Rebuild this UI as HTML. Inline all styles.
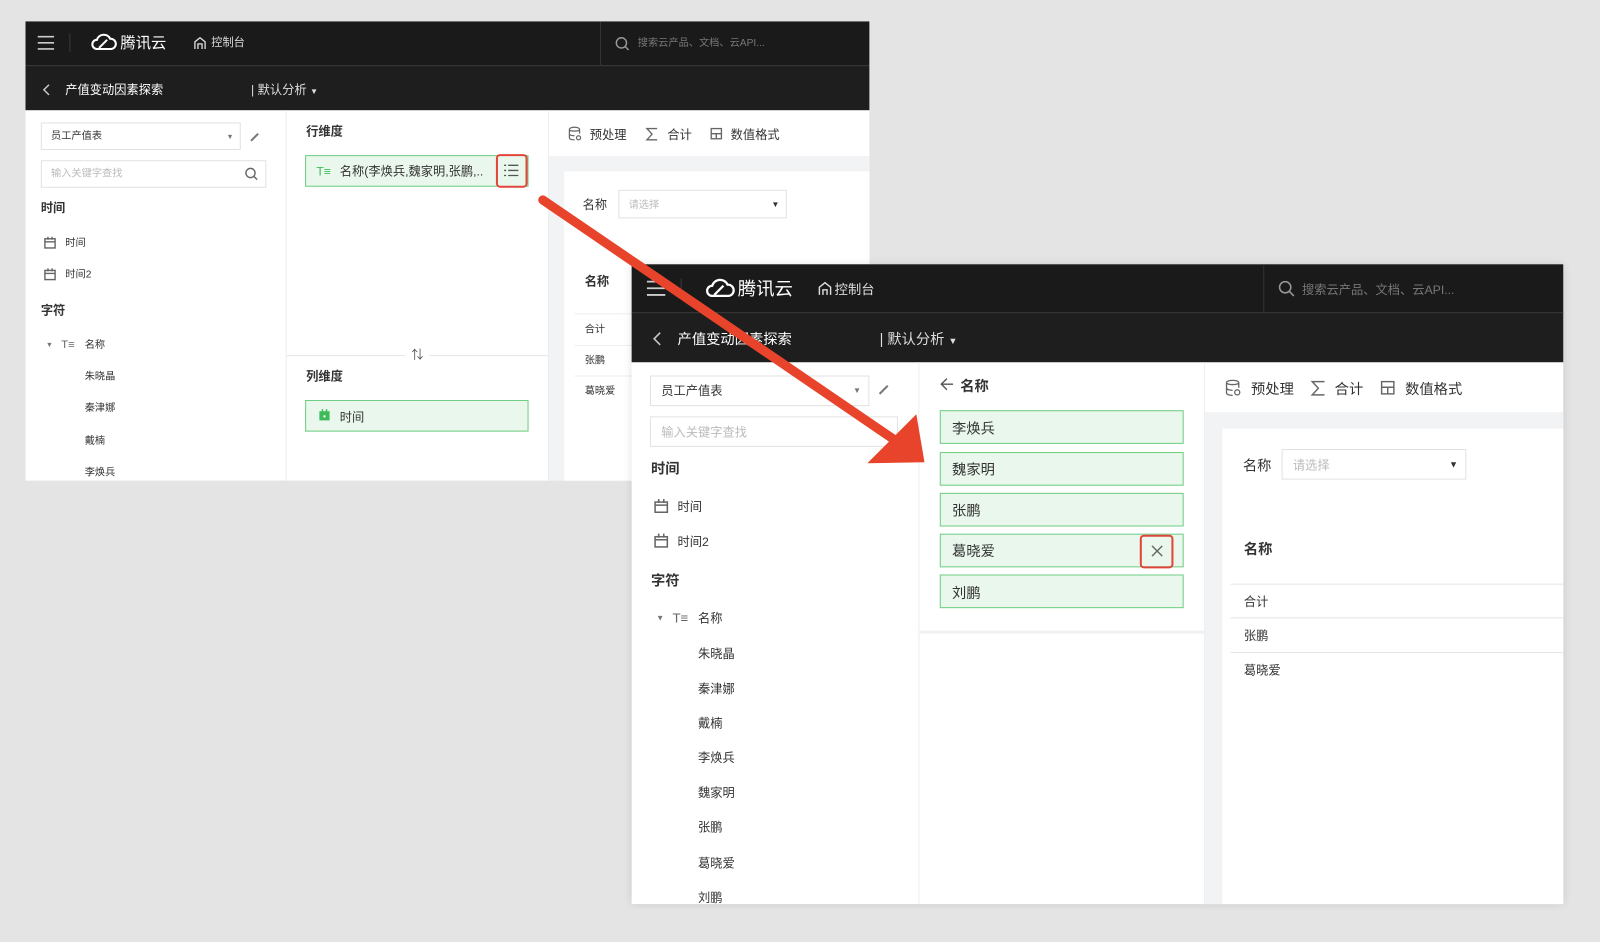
<!DOCTYPE html>
<html><head><meta charset="utf-8">
<style>
*{margin:0;padding:0;box-sizing:border-box}
html,body{width:1600px;height:942px;overflow:hidden;background:#e4e4e4}
body{font-family:"Liberation Sans","Noto Sans CJK SC",sans-serif;color:#333}
#w{position:absolute;left:0;top:0;width:1568px;height:923px;transform:scale(1.0204);transform-origin:0 0}
.a{position:absolute}
.t{position:absolute;white-space:nowrap;line-height:1}
.b{font-weight:bold}
.dark{background:#1c1c1c}
.green{position:absolute;background:#eaf7ec;border:1px solid #6fce83}
.inp{position:absolute;background:#fff;border:1px solid #e2e2e2}
.ph{color:#bbb}
svg{position:absolute;overflow:visible}
</style></head><body><div id="w">

<!-- BACK PANEL -->
<div class="a" style="left:25px;top:21px;width:827px;height:450px;background:#fff"></div>
<div class="a dark" style="left:25px;top:21px;width:827px;height:43px;background:#1a1a1a"></div>
<div class="a dark" style="left:25px;top:64px;width:827px;height:44px;background:#1e1e1e;border-top:1px solid #2c2c2c"></div>
<svg style="left:37px;top:35px" width="16" height="14"><path d="M0 1H16M0 7H16M0 13H16" stroke="#ccc" stroke-width="1.6"/></svg>
<div class="a" style="left:68px;top:33px;width:1px;height:18px;background:#3a3a3a"></div>
<svg style="left:90px;top:31px" width="24" height="20"><path d="M5 17a4.5 4.5 0 0 1 0-9 7 7 0 0 1 13-1 5 5 0 0 1 1 10z M7 16l8-8" fill="none" stroke="#fff" stroke-width="2"/></svg>
<div class="t" style="left:118px;top:35px;font-size:15px;color:#fff">腾讯云</div>
<svg style="left:190px;top:36px" width="12" height="12"><path d="M1 12V5L6 1l5 4v7M4 12V7h4v5" fill="none" stroke="#ddd" stroke-width="1.3"/></svg>
<div class="t" style="left:207px;top:37px;font-size:11px;color:#ddd">控制台</div>
<div class="a" style="left:588px;top:21px;width:1px;height:43px;background:#333"></div>
<svg style="left:603px;top:36px" width="14" height="14"><circle cx="6" cy="6" r="5" fill="none" stroke="#999" stroke-width="1.4"/><path d="M9.5 9.5L13 13" stroke="#999" stroke-width="1.4"/></svg>
<div class="t" style="left:625px;top:38px;font-size:10px;color:#777">搜索云产品、文档、云API...</div>
<svg style="left:41px;top:82px" width="8" height="12"><path d="M7 1L2 6l5 5" fill="none" stroke="#ccc" stroke-width="1.4"/></svg>
<div class="t" style="left:64px;top:82px;font-size:12px;color:#fff">产值变动因素探索</div>
<div class="t" style="left:246px;top:82px;font-size:12px;color:#ddd">| 默认分析 <span style="font-size:8px">▼</span></div>
<!-- back left -->
<div class="inp" style="left:40px;top:120px;width:196px;height:27px"></div>
<div class="t" style="left:50px;top:129px;font-size:10px">员工产值表</div>
<div class="t" style="left:222px;top:131px;font-size:7px;color:#777">▼</div>
<svg style="left:245px;top:129px" width="10" height="10"><path d="M1 9L8 2" stroke="#777" stroke-width="2"/></svg>
<div class="inp" style="left:40px;top:157px;width:221px;height:27px"></div>
<div class="t ph" style="left:50px;top:166px;font-size:10px">输入关键字查找</div>
<svg style="left:240px;top:164px" width="13" height="13"><circle cx="5.5" cy="5.5" r="4.5" fill="none" stroke="#666" stroke-width="1.4"/><path d="M9 9l3 3" stroke="#666" stroke-width="1.4"/></svg>
<div class="t b" style="left:40px;top:198px;font-size:12px">时间</div>
<svg style="left:43px;top:232px" width="12" height="12"><rect x="1" y="2" width="10" height="9" fill="none" stroke="#666" stroke-width="1.4"/><path d="M1 5h10M4 0v3M8 0v3" stroke="#666" stroke-width="1.4"/></svg>
<div class="t" style="left:64px;top:234px;font-size:10px">时间</div>
<svg style="left:43px;top:263px" width="12" height="12"><rect x="1" y="2" width="10" height="9" fill="none" stroke="#666" stroke-width="1.4"/><path d="M1 5h10M4 0v3M8 0v3" stroke="#666" stroke-width="1.4"/></svg>
<div class="t" style="left:64px;top:265px;font-size:10px">时间2</div>
<div class="t b" style="left:40px;top:298px;font-size:12px">字符</div>
<div class="t" style="left:45px;top:335px;font-size:7px;color:#777">▼</div>
<div class="t" style="left:60px;top:333px;font-size:11px;color:#666">T≡</div>
<div class="t" style="left:83px;top:334px;font-size:10px">名称</div>
<div class="t" style="left:83px;top:365px;font-size:10px">朱晓晶</div>
<div class="t" style="left:83px;top:396px;font-size:10px">秦津娜</div>
<div class="t" style="left:83px;top:428px;font-size:10px">戴楠</div>
<div class="t" style="left:83px;top:459px;font-size:10px">李焕兵</div>
<!-- back middle -->
<div class="a" style="left:280px;top:108px;width:1px;height:363px;background:#eee"></div>
<div class="a" style="left:537px;top:108px;width:1px;height:363px;background:#eee"></div>
<div class="t b" style="left:300px;top:123px;font-size:12px">行维度</div>
<div class="green" style="left:299px;top:152px;width:219px;height:31px"></div>
<div class="t" style="left:310px;top:162px;font-size:12px;color:#3dbb5a">T≡</div>
<div class="t" style="left:333px;top:162px;font-size:12px">名称(李焕兵,魏家明,张鹏,..</div>
<div class="a" style="left:486px;top:151px;width:31px;height:33px;border:2px solid #e0473a;border-radius:4px;background:#eaf7ec"></div>
<svg style="left:494px;top:161px" width="14" height="12"><path d="M0 1h2M4 1h10M0 6h2M4 6h10M0 11h2M4 11h10" stroke="#555" stroke-width="1.3"/></svg>
<div class="a" style="left:281px;top:348px;width:256px;height:1px;background:#e5e5e5"></div>
<div class="a" style="left:397px;top:337px;width:24px;height:24px;border-radius:50%;background:#fff"></div>
<div class="t" style="left:403px;top:342px;font-size:12px;color:#555">⇅</div>
<div class="t b" style="left:300px;top:363px;font-size:12px">列维度</div>
<div class="green" style="left:299px;top:392px;width:219px;height:31px"></div>
<svg style="left:312px;top:401px" width="12" height="12"><rect x="1" y="2" width="10" height="9" fill="#3dbb5a"/><path d="M4 0v3M8 0v3" stroke="#3dbb5a" stroke-width="1.4"/><rect x="5" y="6" width="2" height="2" fill="#fff"/></svg>
<div class="t" style="left:333px;top:403px;font-size:12px">时间</div>
<!-- back right -->
<div class="a" style="left:538px;top:153px;width:314px;height:318px;background:#f2f3f5"></div>
<div class="a" style="left:553px;top:168px;width:299px;height:303px;background:#fff"></div>
<svg style="left:557px;top:124px" width="13" height="14"><path d="M1 3c0-3 10-3 10 0v4M1 3v8c0 2 3 2 5 2M1 7c0 2 3 2 5 2M11 3c0 2-10 2-10 0" fill="none" stroke="#666" stroke-width="1.2"/><circle cx="10" cy="11" r="2" fill="none" stroke="#666" stroke-width="1.2"/></svg>
<div class="t" style="left:578px;top:126px;font-size:12px">预处理</div>
<svg style="left:633px;top:125px" width="12" height="13"><path d="M11 1H1l5 5.5L1 12h10" fill="none" stroke="#666" stroke-width="1.3"/></svg>
<div class="t" style="left:654px;top:126px;font-size:12px">合计</div>
<svg style="left:696px;top:125px" width="12" height="12"><rect x="1" y="1" width="10" height="10" fill="none" stroke="#666" stroke-width="1.3"/><path d="M1 6h10M6 6v5" stroke="#666" stroke-width="1.3"/></svg>
<div class="t" style="left:716px;top:126px;font-size:12px">数值格式</div>
<div class="t" style="left:571px;top:195px;font-size:12px">名称</div>
<div class="inp" style="left:606px;top:186px;width:165px;height:28px"></div>
<div class="t ph" style="left:616px;top:197px;font-size:10px">请选择</div>
<div class="t" style="left:756px;top:197px;font-size:8px">▼</div>
<div class="t b" style="left:573px;top:270px;font-size:12px">名称</div>
<div class="a" style="left:563px;top:307px;width:289px;height:1px;background:#eee"></div>
<div class="t" style="left:573px;top:319px;font-size:10px">合计</div>
<div class="a" style="left:563px;top:338px;width:289px;height:1px;background:#eee"></div>
<div class="t" style="left:573px;top:349px;font-size:10px">张鹏</div>
<div class="a" style="left:563px;top:368px;width:289px;height:1px;background:#eee"></div>
<div class="t" style="left:573px;top:379px;font-size:10px">葛晓爱</div>

<!-- FRONT PANEL -->
<div class="a" style="left:619px;top:259px;width:913px;height:627px;background:#fff;box-shadow:0 0 8px rgba(0,0,0,.12)"></div>
<div class="a" style="left:619px;top:259px;width:913px;height:47px;background:#1a1a1a"></div>
<div class="a" style="left:619px;top:306px;width:913px;height:49px;background:#1e1e1e;border-top:1px solid #2c2c2c"></div>
<svg style="left:634px;top:275px" width="18" height="15"><path d="M0 1H18M0 7.5H18M0 14H18" stroke="#ccc" stroke-width="1.8"/></svg>
<div class="a" style="left:667px;top:273px;width:1px;height:20px;background:#3a3a3a"></div>
<svg style="left:692px;top:271px" width="28" height="22"><path d="M6 19a5 5 0 0 1 0-10 8 8 0 0 1 15-1 5.5 5.5 0 0 1 1 11z M8 18l9-9" fill="none" stroke="#fff" stroke-width="2.2"/></svg>
<div class="t" style="left:723px;top:274px;font-size:18px;color:#fff">腾讯云</div>
<svg style="left:802px;top:276px" width="13" height="13"><path d="M1 13V5.5L6.5 1 12 5.5V13M4.5 13V8h4v5" fill="none" stroke="#ddd" stroke-width="1.4"/></svg>
<div class="t" style="left:818px;top:277px;font-size:13px;color:#ddd">控制台</div>
<div class="a" style="left:1238px;top:259px;width:1px;height:47px;background:#333"></div>
<svg style="left:1253px;top:275px" width="16" height="16"><circle cx="6.5" cy="6.5" r="5.5" fill="none" stroke="#999" stroke-width="1.5"/><path d="M10.5 10.5L15 15" stroke="#999" stroke-width="1.5"/></svg>
<div class="t" style="left:1276px;top:278px;font-size:12px;color:#777">搜索云产品、文档、云API...</div>
<svg style="left:639px;top:325px" width="9" height="14"><path d="M8 1L2 7l6 6" fill="none" stroke="#ccc" stroke-width="1.5"/></svg>
<div class="t" style="left:664px;top:325px;font-size:14px;color:#fff">产值变动因素探索</div>
<div class="t" style="left:862px;top:325px;font-size:14px;color:#ddd">| 默认分析 <span style="font-size:9px">▼</span></div>
<!-- front left -->
<div class="a" style="left:900px;top:355px;width:1px;height:531px;background:#eee"></div>
<div class="a" style="left:1180px;top:355px;width:1px;height:531px;background:#eee"></div>
<div class="inp" style="left:637px;top:368px;width:215px;height:30px"></div>
<div class="t" style="left:648px;top:377px;font-size:12px">员工产值表</div>
<div class="t" style="left:836px;top:379px;font-size:8px;color:#777">▼</div>
<svg style="left:861px;top:376px" width="11" height="11"><path d="M1 10L9 2" stroke="#777" stroke-width="2"/></svg>
<div class="inp" style="left:637px;top:408px;width:243px;height:30px"></div>
<div class="t ph" style="left:648px;top:418px;font-size:12px">输入关键字查找</div>
<div class="t b" style="left:638px;top:452px;font-size:14px">时间</div>
<svg style="left:641px;top:489px" width="14" height="14"><rect x="1" y="3" width="12" height="10" fill="none" stroke="#666" stroke-width="1.5"/><path d="M1 6h12M4.5 0v4M9.5 0v4" stroke="#666" stroke-width="1.5"/></svg>
<div class="t" style="left:664px;top:491px;font-size:12px">时间</div>
<svg style="left:641px;top:523px" width="14" height="14"><rect x="1" y="3" width="12" height="10" fill="none" stroke="#666" stroke-width="1.5"/><path d="M1 6h12M4.5 0v4M9.5 0v4" stroke="#666" stroke-width="1.5"/></svg>
<div class="t" style="left:664px;top:525px;font-size:12px">时间2</div>
<div class="t b" style="left:638px;top:562px;font-size:14px">字符</div>
<div class="t" style="left:643px;top:602px;font-size:8px;color:#777">▼</div>
<div class="t" style="left:659px;top:599px;font-size:13px;color:#666">T≡</div>
<div class="t" style="left:684px;top:600px;font-size:12px">名称</div>
<div class="t" style="left:684px;top:635px;font-size:12px">朱晓晶</div>
<div class="t" style="left:684px;top:669px;font-size:12px">秦津娜</div>
<div class="t" style="left:684px;top:703px;font-size:12px">戴楠</div>
<div class="t" style="left:684px;top:737px;font-size:12px">李焕兵</div>
<div class="t" style="left:684px;top:771px;font-size:12px">魏家明</div>
<div class="t" style="left:684px;top:805px;font-size:12px">张鹏</div>
<div class="t" style="left:684px;top:840px;font-size:12px">葛晓爱</div>
<div class="t" style="left:684px;top:874px;font-size:12px">刘鹏</div>
<!-- front middle -->
<svg style="left:921px;top:370px" width="14" height="13"><path d="M13 6.5H2M7 1L1.5 6.5 7 12" fill="none" stroke="#555" stroke-width="1.4"/></svg>
<div class="t b" style="left:941px;top:371px;font-size:14px">名称</div>
<div class="green" style="left:921px;top:402px;width:239px;height:33px"></div>
<div class="t" style="left:933px;top:413px;font-size:14px">李焕兵</div>
<div class="green" style="left:921px;top:443px;width:239px;height:33px"></div>
<div class="t" style="left:933px;top:453px;font-size:14px">魏家明</div>
<div class="green" style="left:921px;top:483px;width:239px;height:33px"></div>
<div class="t" style="left:933px;top:493px;font-size:14px">张鹏</div>
<div class="green" style="left:921px;top:523px;width:239px;height:33px"></div>
<div class="t" style="left:933px;top:533px;font-size:14px">葛晓爱</div>
<div class="a" style="left:1117px;top:524px;width:33px;height:33px;border:2.5px solid #e0473a;border-radius:4px"></div>
<svg style="left:1128px;top:534px" width="12" height="12"><path d="M1 1l10 10M11 1L1 11" stroke="#666" stroke-width="1.4"/></svg>
<div class="green" style="left:921px;top:563px;width:239px;height:33px"></div>
<div class="t" style="left:933px;top:574px;font-size:14px">刘鹏</div>
<div class="a" style="left:901px;top:618px;width:279px;height:3px;background:#f0f1f3"></div>
<!-- front right -->
<div class="a" style="left:1181px;top:404px;width:351px;height:482px;background:#f2f3f5"></div>
<div class="a" style="left:1198px;top:420px;width:334px;height:466px;background:#fff"></div>
<svg style="left:1201px;top:372px" width="15" height="16"><path d="M1 3c0-3 12-3 12 0v5M1 3v10c0 2 4 2.5 6 2.5M1 8c0 2 4 2.5 6 2.5M13 3c0 2.5-12 2.5-12 0" fill="none" stroke="#666" stroke-width="1.3"/><circle cx="11.5" cy="12.5" r="2.5" fill="none" stroke="#666" stroke-width="1.3"/></svg>
<div class="t" style="left:1226px;top:374px;font-size:14px">预处理</div>
<svg style="left:1285px;top:373px" width="14" height="15"><path d="M13 1H1l6 6.5L1 14h12" fill="none" stroke="#666" stroke-width="1.4"/></svg>
<div class="t" style="left:1308px;top:374px;font-size:14px">合计</div>
<svg style="left:1353px;top:373px" width="14" height="14"><rect x="1" y="1" width="12" height="12" fill="none" stroke="#666" stroke-width="1.4"/><path d="M1 6.5h12M7 6.5V13" stroke="#666" stroke-width="1.4"/></svg>
<div class="t" style="left:1377px;top:374px;font-size:14px">数值格式</div>
<div class="t" style="left:1218px;top:449px;font-size:14px">名称</div>
<div class="inp" style="left:1256px;top:440px;width:181px;height:30px"></div>
<div class="t ph" style="left:1267px;top:450px;font-size:12px">请选择</div>
<div class="t" style="left:1420px;top:451px;font-size:9px">▼</div>
<div class="t b" style="left:1219px;top:531px;font-size:14px">名称</div>
<div class="a" style="left:1206px;top:572px;width:326px;height:1px;background:#e6e6e6"></div>
<div class="t" style="left:1219px;top:584px;font-size:12px">合计</div>
<div class="a" style="left:1206px;top:605px;width:326px;height:1px;background:#e6e6e6"></div>
<div class="t" style="left:1219px;top:617px;font-size:12px">张鹏</div>
<div class="a" style="left:1206px;top:639px;width:326px;height:1px;background:#e6e6e6"></div>
<div class="t" style="left:1219px;top:651px;font-size:12px">葛晓爱</div>

<!-- RED ARROW -->
<svg style="left:0;top:0" width="1568" height="923"><path d="M532 196L878 432" stroke="#e8432b" stroke-width="9" stroke-linecap="round"/><polygon points="906,453 850,454 898,406" fill="#e8432b"/></svg>

</div></body></html>
